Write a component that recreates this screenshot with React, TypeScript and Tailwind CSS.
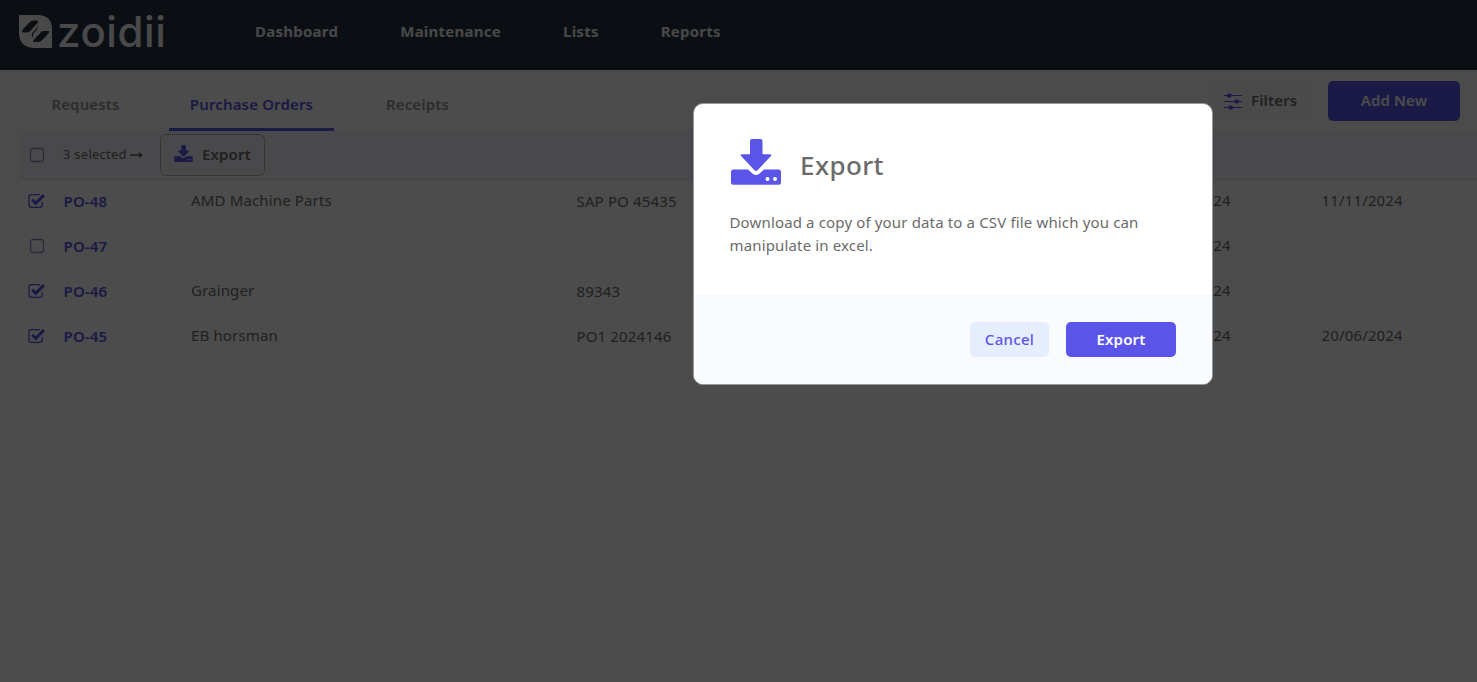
import React from "react";

const rows = [
  { id: "PO-48", checked: true, supplier: "AMD Machine Parts", reference: "SAP PO 45435", created: "11/11/2024", due: "11/11/2024" },
  { id: "PO-47", checked: false, supplier: "", reference: "", created: "25/06/2024", due: "" },
  { id: "PO-46", checked: true, supplier: "Grainger", reference: "89343", created: "25/06/2024", due: "" },
  { id: "PO-45", checked: true, supplier: "EB horsman", reference: "PO1 2024146", created: "20/06/2024", due: "20/06/2024" },
];

function DownloadIcon({ className, dots }: { className: string; dots: string }) {
  return (
    <svg viewBox="0 0 50 46" className={className} aria-hidden="true">
      <path
        fill="currentColor"
        d="M21 0h8.500q2 0 2 2v13.200h7.500q2.400 0 .9 1.900L26.500 31.300q-1.500 1.500-3 0L10.100 17.100q-1.500-1.900.9-1.900H19V2q0-2 2-2z"
      />
      <path
        fill="currentColor"
        d="M2.500 30.500H17l4.700 4.200q3.300 2.700 6.600 0l4.700-4.200h14.500q2.500 0 2.500 2.500v10.200q0 2.500-2.500 2.500h-45Q0 45.700 0 43.200V33q0-2.500 2.500-2.500z"
      />
      <circle cx="36.500" cy="40" r="2" className={dots} />
      <circle cx="44" cy="40" r="2" className={dots} />
    </svg>
  );
}

function Checkbox({ checked }: { checked: boolean }) {
  return (
    <svg viewBox="0 0 18 16" className="h-4 w-[18px] shrink-0" fill="none" aria-hidden="true">
      {checked ? (
        <>
          <path d="M14.200 9v3q0 2.300-2.300 2.300H3.300Q1 14.300 1 12V4q0-2.300 2.300-2.300H12" stroke="#5a55e8" strokeWidth="1.300" />
          <path d="m4.200 6.800 3.500 3.600 8.200-8.300" stroke="#5a55e8" strokeWidth="3" />
        </>
      ) : (
        <rect x="2.500" y="1.500" width="13" height="13" rx="2.500" stroke="#8492c8" strokeWidth="1.300" />
      )}
    </svg>
  );
}

function Logo() {
  return (
    <div className="flex h-[33px] w-[236px] items-center">
      <svg viewBox="0 0 33 33" className="h-[33px] w-[33px] shrink-0" aria-hidden="true">
        <path d="M0 0h20q13 1 13 14v19H14Q1 32 0 19z" fill="#f4f4f4" />
        <path d="M3.500 17.500Q2.300 16 4 14l7-7q1.300-1.300 3-1.400h4.500q1.300.8-.3 2.600L12 15.300q-2 2.200-4.500 2.200z" fill="#253243" />
        <path d="M14.500 27q-1-.7.300-2.200l7-7.300q1.200-1.400 3-1.400h5q1 .8-.3 2.400L23 25.300q-1.500 1.700-3.500 1.700z" fill="#253243" />
        <path d="M19 9.500q.8 3-1.500 5.500l-2.800 3.200q-1.400 2-.7 4.800-2.200-3-.3-5.500l3-3.300q2-2.200 2.300-4.700z" fill="#253243" />
      </svg>
      <span className="ml-[5px] font-['Inter',sans-serif] text-[42px] font-medium leading-[33px] tracking-[0.600px] text-[#f4f4f4]">zoidii</span>
    </div>
  );
}

export default function App() {
  return (
    <div className="relative h-[682px] w-full overflow-hidden bg-[#fafafa] font-['Noto_Sans',sans-serif] text-[15px] tracking-[0.150px] text-[#6b6b6b]">
      <header className="flex h-[70px] bg-[#253243] pl-[19px] pt-[15px]">
        <Logo />
        <nav className="flex h-[33px] items-center gap-[62px] font-bold tracking-[0.250px] text-[#f0f0f0]">
          <a>Dashboard</a>
          <a>Maintenance</a>
          <a>Lists</a>
          <a>Reports</a>
        </nav>
      </header>
      <main className="ml-5 h-[608px] bg-white">
        <div className="flex h-[61px] bg-[#fafafa] pt-[11px]">
          <div className="flex h-[50px] font-semibold text-[#929695]">
            <div className="w-[131px] bg-white pt-3 text-center leading-[22px]">Requests</div>
            <div className="ml-[18px] w-[165px] border-b-[3px] border-[#5a55e8] bg-white pt-3 text-center leading-[22px] text-[#5a55e8]">Purchase Orders</div>
            <div className="ml-[18px] w-[131px] bg-white pt-3 text-center leading-[22px]">Receipts</div>
          </div>
          <div className="ml-auto flex h-10 pr-[17px] font-semibold">
            <button className="mr-5 flex w-[100px] items-center gap-[9px] bg-[#f8f8fc] pl-4">
              <svg viewBox="0 0 18 18" className="h-[18px] w-[18px] text-[#5a55e8]" stroke="currentColor" fill="currentColor" aria-hidden="true">
                <path d="M0 3.500h18M0 9.500h18M0 15.500h18" strokeWidth="1" />
                <rect x="3.500" y="2" width="3.500" height="3" rx="0.500" />
                <rect x="11" y="8" width="3.500" height="3" rx="0.500" />
                <rect x="5" y="14" width="3.500" height="3" rx="0.500" />
              </svg>
              <span className="pb-0.5">Filters</span>
            </button>
            <button className="w-[132px] rounded-[5px] bg-[#5a55e8] pb-0.5 text-white">Add New</button>
          </div>
        </div>
        <div className="flex h-[49px] items-center border-b border-[#e2e2e8] bg-[#f5f5fb] pl-2">
          <div className="pb-px"><Checkbox checked={false} /></div>
          <div className="ml-[17px] flex w-[97px] items-center gap-[3px] text-[13px] tracking-[0.250px]">
            3 selected
            <svg viewBox="0 0 13 8" className="h-2 w-[13px]" aria-hidden="true">
              <path d="M0 4h10" stroke="#5f5f5f" strokeWidth="1.500" />
              <path d="M9 1v6l4-3z" fill="#5f5f5f" />
            </svg>
          </div>
          <button className="flex h-[42px] w-[105px] items-center rounded-md border border-dotted border-[#777] pb-0.5 pl-[13px] font-semibold">
            <DownloadIcon className="-mt-0.5 mr-[9px] h-[17px] w-[19px] text-[#5a55e8]" dots="fill-white" />
            Export
          </button>
        </div>
        {rows.map((row) => (
          <div key={row.id} className="flex h-[45px] items-center border-b border-[#f9f9f9] pb-0.5 pl-2">
            <Checkbox checked={row.checked} />
            <a className="ml-[17.500px] w-[127.500px] font-semibold text-[#5a55e8]">{row.id}</a>
            <span className="w-[385.500px] pb-0.5">{row.supplier}</span>
            <span className="w-[573px]">{row.reference}</span>
            <span className="w-[172px] pb-0.5">{row.created}</span>
            <span className="pb-0.5">{row.due}</span>
          </div>
        ))}
      </main>
      <div className="absolute inset-0 bg-black/70" />
      <section role="dialog" className="absolute left-[693px] top-[103px] flex h-[282px] w-[520px] flex-col overflow-hidden rounded-[10px] border border-[#92989f] bg-white">
        <div className="h-[190px] px-[35px] pt-[35px]">
          <div className="flex h-[52px] items-center">
            <DownloadIcon className="-mt-[6px] ml-[2px] h-[46px] w-[50px] text-[#5a55e8]" dots="fill-white" />
            <h2 className="ml-[19px] text-[26px] font-medium tracking-[0.400px]">Export</h2>
          </div>
          <p className="ml-[0.500px] mt-5 w-[430px] leading-[23px]">Download a copy of your data to a CSV file which you can manipulate in excel.</p>
        </div>
        <footer className="flex flex-1 justify-end gap-[17px] bg-[#fafbfd] pr-9 pt-7 font-semibold">
          <button className="h-[35px] w-[79px] rounded-[5px] bg-[#e6edff] font-medium tracking-[0.300px] text-[#5a55e8]">Cancel</button>
          <button className="h-[35px] w-[110px] rounded-[5px] bg-[#5a55e8] text-white">Export</button>
        </footer>
      </section>
    </div>
  );
}
